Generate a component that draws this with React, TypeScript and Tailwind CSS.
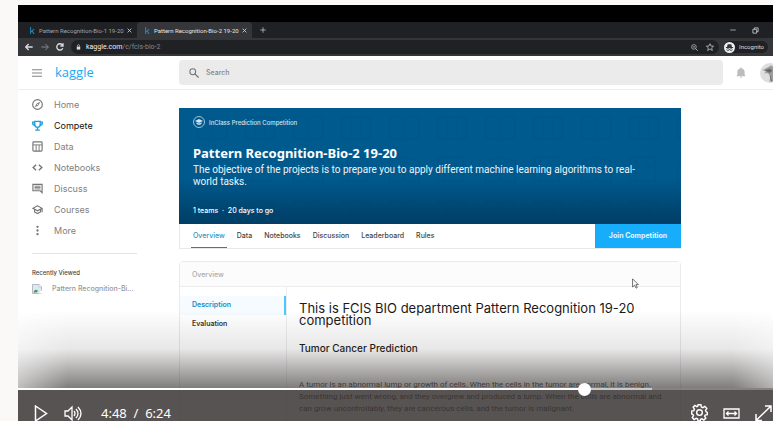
import React, { useState } from "react";

const stroke = { fill: "none", stroke: "currentColor", strokeWidth: 2 } as const;

function Icon({ className, children }: { className: string; children: React.ReactNode }) {
  return (
    <svg viewBox="0 0 24 24" className={className} aria-hidden="true" {...stroke}>
      {children}
    </svg>
  );
}

const navItems = [
  { label: "Home", icon: <><circle cx="12" cy="12" r="10.500" strokeWidth="2.500" /><path d="M17 7l-3.500 6.500L7 17l3.500-6.500z" fill="currentColor" strokeWidth="1" /><circle cx="12" cy="12" r="1.200" fill="#fff" stroke="none" /></> },
  { label: "Compete", active: true, icon: <><path d="M6 3h12v7a6 6 0 0 1-12 0zM6 4.500H1.500v2a5 5 0 0 0 5 5M18 4.500h4.500v2a5 5 0 0 1-5 5M12 16v5M7 22h10" strokeWidth="3" /></> },
  { label: "Data", icon: <><rect x="2" y="2" width="20" height="20" rx="2" strokeWidth="2.500" /><path d="M2 8.500h20M9 8.500V22M15.500 8.500V22" /></> },
  { label: "Notebooks", icon: <path d="M9 6l-6.500 6L9 18M15 6l6.500 6-6.500 6" strokeWidth="3" /> },
  { label: "Discuss", icon: <><path d="M2 3h20v18l-4-4H2z" strokeWidth="2.500" /><path d="M5.500 7h13M5.500 10h13M5.500 13h13" /></> },
  { label: "Courses", icon: <><path d="M12 4L2 9.500 12 15l10-5.500zM5.500 12v5.500L12 21l6.500-3.500V12M22 9.500V18" strokeWidth="2.500" /></> },
  { label: "More", icon: <g fill="currentColor" stroke="none"><circle cx="12" cy="4" r="2.500" /><circle cx="12" cy="12" r="2.500" /><circle cx="12" cy="20" r="2.500" /></g> },
];

function Tab({ title, active }: { title: string; active?: boolean }) {
  return (
    <div className={`flex h-4 w-[115px] items-center rounded-t-sm pl-[7px] pr-[5px] ${active ? "bg-[#35363a] text-[#e4e5e7]" : "text-[#a0a3a8]"}`}>
      <svg viewBox="0 0 8 10" className="h-[7px] w-[6px] shrink-0 text-[#1789c4]" fill="none" stroke="currentColor" strokeWidth="1.5" aria-hidden="true">
        <path d="M2 0v10M7 3L2.500 7M4 5.500L7 10" />
      </svg>
      <span className="ml-1 flex-1 whitespace-nowrap font-['Roboto',sans-serif] text-[6px]">{title}</span>
      <button aria-label="Close tab" className="ml-[3px]">
        <Icon className="size-[5px] text-[#d5d6d8]"><path d="M3 3l18 18M21 3L3 21" strokeWidth="4" /></Icon>
      </button>
    </div>
  );
}

function BrowserBar() {
  return (
    <div>
      <div className="flex h-4 items-center bg-[#202124] pl-1">
        <Tab title="Pattern Recognition-Bio-1 19-20" />
        <Tab title="Pattern Recognition-Bio-2 19-20" active />
        <button aria-label="New tab" className="ml-2 text-[#c4c6c9]">
          <Icon className="size-[6px]"><path d="M12 1v22M1 12h22" strokeWidth="3" /></Icon>
        </button>
        <div className="ml-auto flex items-center gap-4 pr-[14px] text-[#c4c6c9]">
          <button aria-label="Minimize"><Icon className="size-[6px]"><path d="M1 12h22" strokeWidth="3" /></Icon></button>
          <button aria-label="Restore"><Icon className="size-[7px]"><path d="M3 8h13v13H3zM8 8V3h13v13h-5" strokeWidth="3" /></Icon></button>
        </div>
      </div>
      <div className="flex h-[18px] items-center bg-[#35363a] pl-[7px] pr-[5px] text-[#dadce0]">
        <button aria-label="Back"><Icon className="size-2"><path d="M23 12H2M11 3l-9 9 9 9" strokeWidth="4" /></Icon></button>
        <button aria-label="Forward" className="ml-2 text-[#85878b]"><Icon className="size-2"><path d="M1 12h21M13 3l9 9-9 9" strokeWidth="3" /></Icon></button>
        <button aria-label="Reload" className="ml-[7px]"><Icon className="size-2"><path d="M20.500 16A9.500 9.500 0 1 1 19 5.500M21 1v8h-8" strokeWidth="4" /></Icon></button>
        <div className="ml-[7px] flex h-[14px] flex-1 items-center rounded-full bg-[#202124] px-[5px]">
          <svg viewBox="0 0 10 14" className="h-[6px] w-[5px]" aria-hidden="true"><path d="M1 6h8v7H1z" fill="currentColor" /><path d="M2.500 6V4a2.500 2.500 0 0 1 5 0v2" fill="none" stroke="currentColor" strokeWidth="1.500" /></svg>
          <span className="ml-[5px] font-['Roboto',sans-serif] text-[7px] leading-none text-[#f1f1f2]">kaggle.com<span className="text-[#85878b]">/c/fcis-bio-2</span></span>
          <div className="ml-auto flex items-center gap-2">
            <Icon className="size-[7px]"><circle cx="10" cy="10" r="8" /><path d="M16 16l7 7M6 10h8" strokeWidth="2.500" /></Icon>
            <Icon className="size-[8px]"><path d="M12 2l3 7 8 .5-6 5 2 8-7-4.500-7 4.500 2-8-6-5L9 9z" /></Icon>
          </div>
        </div>
        <div className="ml-[5px] flex h-3 items-center rounded-full bg-[#202124] pr-1">
          <svg viewBox="0 0 24 24" className="size-[11px]" aria-hidden="true">
            <circle cx="12" cy="12" r="12" fill="#f1f3f4" />
            <path d="M8 5h8l1.500 6h-11zM4 11h16v2H4z" fill="#35363a" />
            <g fill="none" stroke="#35363a" strokeWidth="1.500"><circle cx="8.500" cy="16.500" r="2.500" /><circle cx="15.500" cy="16.500" r="2.500" /><path d="M11 16h2" /></g>
          </svg>
          <span className="ml-1 font-['Roboto',sans-serif] text-[6px] leading-none">Incognito</span>
        </div>
      </div>
    </div>
  );
}

function SiteHeader() {
  return (
    <header className="flex h-[34px] items-center border-b border-[#eeeeee] pl-[14px]">
      <button aria-label="Menu" className="text-[#858585]"><Icon className="size-[10px]"><path d="M0 4h24M0 12h24M0 20h24" strokeWidth="2.500" /></Icon></button>
      <a href="#" className="ml-[13px] w-[124px] font-['Open_Sans',sans-serif] text-[13px] leading-none text-[#20a9ee]">kaggle</a>
      <label className="flex h-[25px] flex-1 items-center rounded bg-[#ebebeb] pl-[10px] text-[#757575]">
        <Icon className="size-[10px]"><circle cx="9" cy="9" r="7" strokeWidth="2.500" /><path d="M14 14l9 9" strokeWidth="3" /></Icon>
        <input type="search" placeholder="Search" aria-label="Search" className="ml-[7px] w-40 bg-transparent pt-[2px] text-[7px] font-medium outline-none placeholder:text-[#858585]" />
      </label>
      <button aria-label="Notifications" className="ml-[13px] text-[#bdbdbd]">
        <svg viewBox="0 0 20 24" className="h-[11px] w-[10px]" fill="currentColor" aria-hidden="true"><path d="M10 0l2 3c4 1 6 4 6 8v6l2 3H0l2-3v-6c0-4 2-7 6-8zM7.500 21h5a2.500 2.500 0 0 1-5 0z" /></svg>
      </button>
      <svg viewBox="0 0 40 40" className="-mr-[7px] ml-[14px] size-5 shrink-0" role="img" aria-label="Profile">
        <circle cx="20" cy="20" r="20" fill="#dedede" />
        <path d="M5 14l10-5 7-4 9 5 3 7-4 2 2 6-5 12H19l2-12-7-5-6 1 4-4z" fill="#9c9c9c" />
        <path d="M11 15l8-3 5 3-4 4zM20 24l3 13" fill="#626262" stroke="#717171" strokeWidth="2" />
      </svg>
    </header>
  );
}

function Sidebar() {
  return (
    <aside className="w-[161px] shrink-0 pl-[14px] pt-1">
      <nav>
        {navItems.map((item) => (
          <a key={item.label} href="#" className={`flex h-[21px] items-center gap-[11px] text-[9px] ${item.active ? "text-[#111]" : "text-[#808080]"}`}>
            <Icon className={`size-[11px] ${item.active ? "text-[#20a0dc]" : "text-[#757575]"}`}>{item.icon}</Icon>
            {item.label}
          </a>
        ))}
      </nav>
      <hr className="mr-[42px] mt-3 border-[#e4e4e4]" />
      <h2 className="mt-[14px] text-[6px] font-medium leading-[10px] text-[#444]">Recently Viewed</h2>
      <a href="#" className="mt-[6px] flex items-center gap-[10px] text-[7px] font-medium leading-[10px] text-[#999]">
        <svg viewBox="0 0 20 20" className="size-[10px]" aria-hidden="true">
          <path d="M1 1h13l5 5v13H1z" fill="#dce9f5" stroke="#a3a9ae" strokeWidth="1.500" />
          <path d="M14 1v5h5" fill="#fff" stroke="#a3a9ae" />
          <path d="M3 17c2-7 6-7 9-3l-3 3z" fill="#459c45" />
          <path d="M20 12L13 19h7z" fill="#fff" />
        </svg>
        Pattern Recognition-Bi...
      </a>
    </aside>
  );
}

function Books() {
  return (
    <svg className="absolute inset-0 size-full text-[#003f68] opacity-10" aria-hidden="true">
      <defs>
        <pattern id="books" width="96" height="84" patternUnits="userSpaceOnUse" y="6">
          <g fill="none" stroke="currentColor" strokeWidth="2">
            <path d="M19 3q7-2 14 2q7-4 15-2v22q-8-1-15 1q-7-2-14-1zM33 5v21" />
            <path d="M67 3h28v22H67zM76 3v22M86 3v22" />
            <path d="M19 47l14-4 15 4v22l-15-3-14 3zM33 43v23" />
            <path d="M67 43h25v24H67zM73 43v24M82 49l6 5" />
          </g>
        </pattern>
      </defs>
      <rect width="100%" height="100%" fill="url(#books)" />
    </svg>
  );
}

function Competition() {
  return (
    <main className="w-[502px] shrink-0 pt-[18px]">
      <section className="relative h-[116px] bg-linear-to-b from-[#005a8e] from-60% to-[#003e66] px-[14px] pt-2 text-white">
        <Books />
        <div className="relative">
          <p className="flex h-3 items-center gap-1 text-[6px] font-medium text-[#d3e4ee]">
            <svg viewBox="0 0 24 24" className="size-3" aria-hidden="true"><circle cx="12" cy="12" r="11" fill="none" stroke="currentColor" strokeWidth="1.500" /><path d="M12 6l8 4-8 4-8-4zM7 13v3l5 2 5-2v-3l-5 2z" fill="currentColor" /></svg>
            InClass Prediction Competition
          </p>
          <h1 className="mt-[17px] font-['Noto_Sans',sans-serif] text-[13px] font-bold leading-4">Pattern Recognition-Bio-2 19-20</h1>
          <p className="mt-[3px] font-['Roboto',sans-serif] text-[10px] leading-[12px] text-[#edf4f8]">The objective of the projects is to prepare you to apply different machine learning algorithms to real-<br />world tasks.</p>
          <p className="mt-[18px] text-[7px] font-medium leading-[10px]">1 teams&nbsp; ·&nbsp; 20 days to go</p>
        </div>
      </section>
      <nav className="flex h-[25px] items-stretch border-b border-l border-[#e8e8e8] pl-[11px] text-[7px] font-medium text-[#444]">
        <a href="#" className="flex items-center border-b border-[#2383b8] px-[2px] pt-[2px] text-[#3191c3]">Overview</a>
        <div className="ml-[10px] flex items-center gap-3 pt-px">
          {["Data", "Notebooks", "Discussion", "Leaderboard", "Rules"].map((label) => <a key={label} href="#">{label}</a>)}
        </div>
        <button className="ml-auto w-[86px] bg-[#17adfb] pt-px text-[7px] font-bold text-[#e4f6ff]">Join Competition</button>
      </nav>
      <section className="mt-3 rounded-t-sm border border-[#e9e9ee]">
        <h2 className="h-[25px] border-b border-[#ededf0] bg-[#fcfcfd] pl-3 text-[7px] font-medium leading-[25px] text-[#aaa]">Overview</h2>
        <div className="flex">
          <nav className="w-[107px] shrink-0 border-r border-[#ededf0] pt-[9px] text-[7px] font-semibold text-[#333]">
            <a href="#" className="flex h-[19px] items-center border-r-2 border-[#4cc9fb] bg-[#f5fbff] pl-3 text-[#208bc2]">Description</a>
            <a href="#" className="flex h-[19px] items-center pl-3">Evaluation</a>
          </nav>
          <article className="min-w-0 flex-1 pl-3 pt-[15px] text-[#1a1a1a]">
            <h3 className="text-[13px] leading-3">This is FCIS BIO department Pattern Recognition 19-20<br />competition</h3>
            <h4 className="mt-[15px] text-[10px] font-medium leading-[14px]">Tumor Cancer Prediction</h4>
            <p className="mt-6 whitespace-nowrap pb-10 font-['Roboto',sans-serif] text-[8px] leading-3 text-[#444]">
              A tumor is an abnormal lump or growth of cells. When the cells in the tumor are normal, it is benign.<br />
              Something just went wrong, and they overgrew and produced a lump. When the cells are abnormal and<br />
              can grow uncontrollably, they are cancerous cells, and the tumor is malignant.
            </p>
          </article>
        </div>
      </section>
    </main>
  );
}

function PlayerControls() {
  const duration = 384;
  const [time, setTime] = useState(290);
  return (
    <div className="absolute inset-x-0 bottom-0 text-white">
      <div className="h-[78px] bg-linear-to-b from-transparent via-[#3b3735]/12 via-50% to-[#3b3735]/65 [mask-image:linear-gradient(to_right,rgba(0,0,0,0.5),#000_50px,#000_calc(100%-40px),rgba(0,0,0,0.6))]" />
      <input
        type="range"
        aria-label="Seek"
        min={0}
        max={duration}
        value={time}
        onChange={(event) => setTime(Number(event.target.value))}
        className="relative z-10 -my-[6px] block h-[14px] w-full appearance-none bg-[length:100%_2px] bg-center bg-no-repeat [&::-webkit-slider-thumb]:size-[13px] [&::-webkit-slider-thumb]:appearance-none [&::-webkit-slider-thumb]:rounded-full [&::-webkit-slider-thumb]:bg-white"
        style={{ backgroundImage: `linear-gradient(to right, #fff ${(time / duration) * 100}%, #c9c7c6 0 84%, #858281 0)` }}
      />
      <div className="flex h-[31px] items-end bg-[#373231]/84 pl-4 pr-[1px]">
        <button aria-label="Play"><svg viewBox="0 0 14 16" className="h-4 w-[14px]" fill="none" stroke="currentColor" strokeWidth="1.500" aria-hidden="true"><path d="M1.500 1l11 7.500-11 7.500z" /></svg></button>
        <button aria-label="Mute" className="ml-4"><svg viewBox="0 0 18 16" className="h-4 w-[18px]" fill="none" stroke="currentColor" strokeWidth="1.300" aria-hidden="true"><path d="M1 6h3l4-4v13l-4-4H1zM10 6q2 2.500 0 5M12 4q4 4.500 0 9M14 2q6 6.500 0 13" /></svg></button>
        <span className="ml-[19px] font-['Noto_Sans',sans-serif] text-[13px] leading-4">4:48&nbsp; /&nbsp; 6:24</span>
        <div className="ml-auto flex gap-[15px]">
          <button aria-label="Settings"><Icon className="size-[17px]"><circle cx="12" cy="12" r="4" /><path d="M10 1h4l.7 3.300 2 .8 2.800-1.800 2.800 2.800-1.800 2.800.8 2L23 12v3l-3 .6-.8 1.500 1.800 2.800-2.800 2.800-2.800-1.800-2 .8L13 24h-3l-.8-3-2-.8-2.800 1.800-2.600-2.800 1.800-2.800-.8-1.600L1 14v-4l3-.7.8-2L3 4.500 5.500 2l2.800 1.800 1.200-.6z" /></Icon></button>
          <button aria-label="Fit width"><svg viewBox="0 0 17 16" className="h-4 w-[17px]" fill="none" stroke="currentColor" strokeWidth="1.300" aria-hidden="true"><path d="M1 4h15v9H1zM3.500 8.500h10M5.500 6.500l-2 2 2 2M11.500 6.500l2 2-2 2" /></svg></button>
          <button aria-label="Full screen"><svg viewBox="0 0 17 16" className="h-4 w-[17px]" fill="none" stroke="currentColor" strokeWidth="1.500" aria-hidden="true"><path d="M1 15.500L16 1M10 1h6v6M1 9v6.500h6" /></svg></button>
        </div>
      </div>
    </div>
  );
}

export default function App() {
  return (
    <div className="h-screen overflow-hidden bg-[#faf9f8] pl-[18px] pt-[5px] font-['Inter',sans-serif]">
      <div className="relative h-full overflow-hidden bg-white">
        <div className="h-[17px] bg-black" />
        <BrowserBar />
        <SiteHeader />
        <div className="flex">
          <Sidebar />
          <Competition />
        </div>
        <svg viewBox="0 0 12 18" className="absolute left-[614px] top-[273px] h-[11px] w-[7px]" aria-hidden="true">
          <path d="M1 1v14l3.500-3 2.500 5 2-1-2.300-5H11z" fill="#fff" stroke="#444" strokeWidth="1.300" />
        </svg>
        <PlayerControls />
      </div>
    </div>
  );
}
